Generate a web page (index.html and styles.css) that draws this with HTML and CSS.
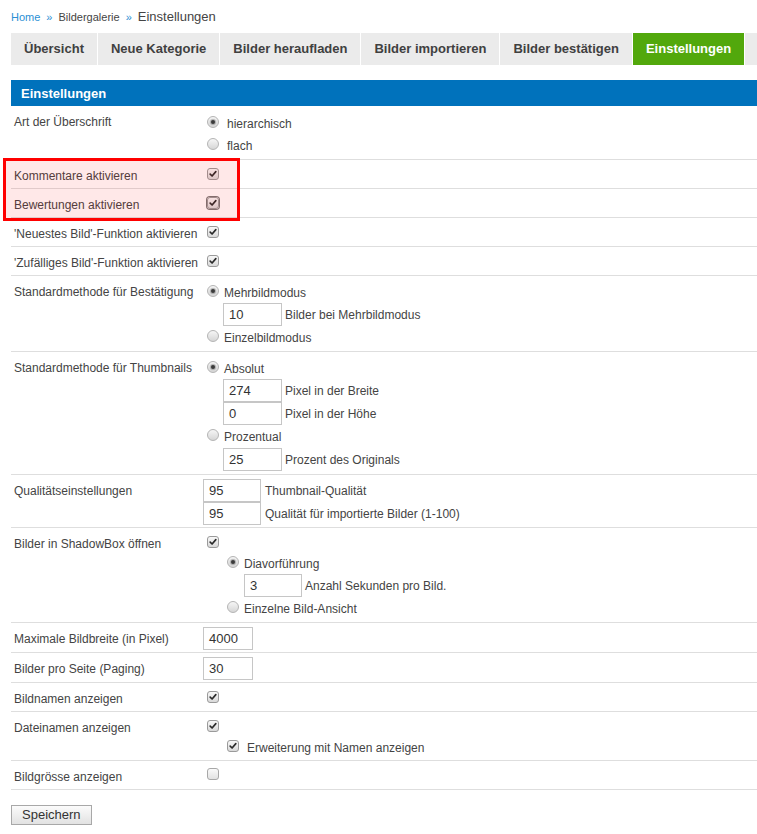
FILE: index.html
```html
<!DOCTYPE html>
<html lang="de">
<head>
<meta charset="utf-8">
<title>Bildergalerie – Einstellungen</title>
<link rel="stylesheet" href="styles.css">
</head>
<body>
<div class="page">
  <div class="crumbs"><a class="crumb-link" href="#">Home</a><span class="crumb-sep">»</span><a class="crumb-mid" href="#">Bildergalerie</a><span class="crumb-sep">»</span><span class="crumb-cur">Einstellungen</span></div>

  <nav class="tabs">
    <a class="tab" href="#">Übersicht</a>
    <a class="tab" href="#">Neue Kategorie</a>
    <a class="tab" href="#">Bilder heraufladen</a>
    <a class="tab" href="#">Bilder importieren</a>
    <a class="tab" href="#">Bilder bestätigen</a>
    <a class="tab tab-active" href="#">Einstellungen</a>
  </nav>

  <div class="panel-head">Einstellungen</div>

  <div class="form">
    <div class="row">
      <div class="lbl">Art der Überschrift</div>
      <div class="ctl ctl-r1">
        <div class="opt"><span class="rb rb-on"></span><span class="opt-text opt-wide">hierarchisch</span></div>
        <div class="opt"><span class="rb"></span><span class="opt-text opt-wide">flach</span></div>
      </div>
    </div>

    <div class="row">
      <div class="lbl">Kommentare aktivieren</div>
      <div class="ctl ctl-cb"><span class="cb"><svg class="tick" viewBox="0 0 12 12"><path d="M2.6 6.2 L4.9 8.4 L9.4 3.2"/></svg></span></div>
    </div>

    <div class="row">
      <div class="lbl">Bewertungen aktivieren</div>
      <div class="ctl ctl-cb"><span class="cb cb-focus"><svg class="tick" viewBox="0 0 12 12"><path d="M2.6 6.2 L4.9 8.4 L9.4 3.2"/></svg></span></div>
    </div>

    <div class="row">
      <div class="lbl">'Neuestes Bild'-Funktion aktivieren</div>
      <div class="ctl ctl-cb"><span class="cb"><svg class="tick" viewBox="0 0 12 12"><path d="M2.6 6.2 L4.9 8.4 L9.4 3.2"/></svg></span></div>
    </div>

    <div class="row">
      <div class="lbl">'Zufälliges Bild'-Funktion aktivieren</div>
      <div class="ctl ctl-cb"><span class="cb"><svg class="tick" viewBox="0 0 12 12"><path d="M2.6 6.2 L4.9 8.4 L9.4 3.2"/></svg></span></div>
    </div>

    <div class="row">
      <div class="lbl">Standardmethode für Bestätigung</div>
      <div class="ctl ctl-r">
        <div class="opt"><span class="rb rb-on"></span><span class="opt-text">Mehrbildmodus</span></div>
        <div class="inl inl-1"><span class="field field-m">10</span><span class="inl-text">Bilder bei Mehrbildmodus</span></div>
        <div class="opt"><span class="rb"></span><span class="opt-text">Einzelbildmodus</span></div>
      </div>
    </div>

    <div class="row">
      <div class="lbl">Standardmethode für Thumbnails</div>
      <div class="ctl ctl-r">
        <div class="opt"><span class="rb rb-on"></span><span class="opt-text">Absolut</span></div>
        <div class="inl inl-1"><span class="field field-m">274</span><span class="inl-text">Pixel in der Breite</span></div>
        <div class="inl inl-1"><span class="field field-m">0</span><span class="inl-text">Pixel in der Höhe</span></div>
        <div class="opt"><span class="rb"></span><span class="opt-text">Prozentual</span></div>
        <div class="inl inl-1 inl-gap"><span class="field field-m">25</span><span class="inl-text">Prozent des Originals</span></div>
      </div>
    </div>

    <div class="row">
      <div class="lbl">Qualitätseinstellungen</div>
      <div class="ctl ctl-in">
        <div class="inl"><span class="field field-s">95</span><span class="inl-text inl-text-4">Thumbnail-Qualität</span></div>
        <div class="inl"><span class="field field-s">95</span><span class="inl-text inl-text-4">Qualität für importierte Bilder (1-100)</span></div>
      </div>
    </div>

    <div class="row">
      <div class="lbl">Bilder in ShadowBox öffnen</div>
      <div class="ctl ctl-cb ctl-sub">
        <span class="cb cb-block"><svg class="tick" viewBox="0 0 12 12"><path d="M2.6 6.2 L4.9 8.4 L9.4 3.2"/></svg></span>
        <div class="opt opt-2"><span class="rb rb-on"></span><span class="opt-text">Diavorführung</span></div>
        <div class="inl inl-2"><span class="field field-s">3</span><span class="inl-text">Anzahl Sekunden pro Bild.</span></div>
        <div class="opt opt-2"><span class="rb"></span><span class="opt-text">Einzelne Bild-Ansicht</span></div>
      </div>
    </div>

    <div class="row">
      <div class="lbl">Maximale Bildbreite (in Pixel)</div>
      <div class="ctl ctl-in"><div class="inl"><span class="field field-xs">4000</span></div></div>
    </div>

    <div class="row">
      <div class="lbl">Bilder pro Seite (Paging)</div>
      <div class="ctl ctl-in"><div class="inl"><span class="field field-xs">30</span></div></div>
    </div>

    <div class="row">
      <div class="lbl">Bildnamen anzeigen</div>
      <div class="ctl ctl-cb"><span class="cb"><svg class="tick" viewBox="0 0 12 12"><path d="M2.6 6.2 L4.9 8.4 L9.4 3.2"/></svg></span></div>
    </div>

    <div class="row">
      <div class="lbl">Dateinamen anzeigen</div>
      <div class="ctl ctl-cb ctl-sub2">
        <span class="cb cb-block"><svg class="tick" viewBox="0 0 12 12"><path d="M2.6 6.2 L4.9 8.4 L9.4 3.2"/></svg></span>
        <div class="opt opt-2"><span class="cb cb-inline"><svg class="tick" viewBox="0 0 12 12"><path d="M2.6 6.2 L4.9 8.4 L9.4 3.2"/></svg></span><span class="opt-text opt-text-cb">Erweiterung mit Namen anzeigen</span></div>
      </div>
    </div>

    <div class="row">
      <div class="lbl">Bildgrösse anzeigen</div>
      <div class="ctl ctl-cb ctl-cb7"><span class="cb cb-off"></span></div>
    </div>
  </div>

  <button class="btn" type="button">Speichern</button>

  <div class="highlight"></div>
</div>
</body>
</html>
```

FILE: styles.css
```css
* {
  box-sizing: border-box;
}

body {
  margin: 0;
  background: #fff;
  color: #444;
  font-family: "Liberation Sans", Arial, Helvetica, sans-serif;
}

.page {
  position: relative;
  padding-left: 11px;
  padding-bottom: 10px;
}

/* breadcrumb */
.crumbs {
  height: 33px;
  padding-top: 9px;
  font-size: 11px;
  line-height: 16px;
  white-space: nowrap;
}

.crumb-link {
  color: #2b8fd4;
  text-decoration: none;
}

.crumb-sep {
  color: #2b8fd4;
  margin: 0 6px;
}

.crumb-mid {
  color: #444;
  text-decoration: none;
}

.crumb-cur {
  font-size: 13px;
  color: #444;
}

/* tabs */
.tabs {
  display: flex;
  height: 32px;
  background: #ebebeb;
}

.tab {
  padding: 0 13px;
  line-height: 32px;
  font-size: 13px;
  font-weight: bold;
  color: #404040;
  text-decoration: none;
  white-space: nowrap;
  border-right: 1px solid #fff;
}

.tab-active {
  background: #52a80c;
  color: #fff;
}

/* panel header */
.panel-head {
  margin-top: 15px;
  height: 26px;
  line-height: 27px;
  padding-left: 10px;
  background: #0072bc;
  color: #fff;
  font-size: 13px;
  font-weight: bold;
}

/* rows */
.row {
  display: flex;
  border-bottom: 1px solid #dedede;
}

.lbl {
  flex: none;
  width: 192px;
  padding: 8px 0 4px 3px;
  font-size: 12px;
  line-height: 16px;
  white-space: nowrap;
}

.ctl {
  flex: 1;
  font-size: 12px;
  line-height: 16px;
  white-space: nowrap;
}

.ctl-r1 {
  padding: 6px 0 3px;
}

.ctl-r {
  padding: 5px 0 3px;
}

.ctl-cb {
  padding-top: 8px;
}

.ctl-cb7 {
  padding-top: 7px;
}

.ctl-in {
  padding: 4px 0 2px;
}

.ctl-sub {
  padding-bottom: 3px;
}

.ctl-sub2 {
  padding-bottom: 2px;
}

/* option lines */
.opt {
  display: flex;
  align-items: center;
  height: 22px;
  padding-left: 4px;
}

.opt-2 {
  padding-left: 24px;
}

.opt-text {
  margin-left: 5px;
  margin-top: 2px;
}

.opt-wide {
  margin-left: 8px;
}

.opt-text-cb {
  margin-left: 8px;
}

.inl {
  display: flex;
  align-items: center;
}

.inl-1 {
  padding-left: 20px;
}

.inl-2 {
  padding-left: 41px;
}

.inl-gap {
  margin-top: 1px;
}

.inl-text {
  margin-left: 3px;
}

.inl-text-4 {
  margin-left: 4px;
}

/* text fields */
.field {
  display: block;
  height: 23px;
  padding-left: 5px;
  border: 1px solid #c6c6c6;
  background: #fff;
  color: #333;
  font-size: 13px;
  line-height: 21px;
}

.field-m {
  width: 59px;
}

.field-s {
  width: 58px;
}

.field-xs {
  width: 50px;
}

/* radio */
.rb {
  flex: none;
  position: relative;
  width: 12px;
  height: 12px;
  margin-bottom: 3px;
  border: 1px solid #b4b4b4;
  border-radius: 50%;
  background: linear-gradient(#f6f6f6, #d6d6d6);
}

.rb-on::after {
  content: "";
  position: absolute;
  left: 3px;
  top: 3px;
  width: 4px;
  height: 4px;
  border-radius: 50%;
  background: #3a3a3a;
  box-shadow: 0 0 1px 1px rgba(60, 60, 60, 0.35);
}

/* checkbox */
.cb {
  display: block;
  width: 12px;
  height: 12px;
  margin-left: 4px;
  border: 1px solid #9a9a9a;
  border-radius: 3px;
  background: linear-gradient(#f8f8f8, #d9d9d9);
}

.cb-block {
  margin-bottom: 4px;
}

.cb-inline {
  flex: none;
  margin-left: 0;
  margin-bottom: 3px;
}

.cb-off {
  border-color: #a8a8a8;
  background: linear-gradient(#fafafa, #e2e2e2);
}

.cb-focus {
  box-shadow: 0 0 0 1px #777;
}

.tick {
  display: block;
  width: 10px;
  height: 10px;
}

.tick path {
  fill: none;
  stroke: #2a2a2a;
  stroke-width: 2;
  stroke-linecap: round;
  stroke-linejoin: round;
}

/* save button */
.btn {
  display: block;
  margin-top: 15px;
  height: 20px;
  padding: 0 10px;
  border: 1px solid #a8a8a8;
  border-radius: 0;
  background: linear-gradient(#fbfbfb, #e2e2e2);
  color: #333;
  font-family: "Liberation Sans", Arial, Helvetica, sans-serif;
  font-size: 13px;
  line-height: 18px;
}

/* red annotation box */
.highlight {
  position: absolute;
  left: 3px;
  top: 158px;
  width: 237px;
  height: 63px;
  border: 3px solid #f00;
  background: rgba(255, 0, 0, 0.09);
  pointer-events: none;
}
```
